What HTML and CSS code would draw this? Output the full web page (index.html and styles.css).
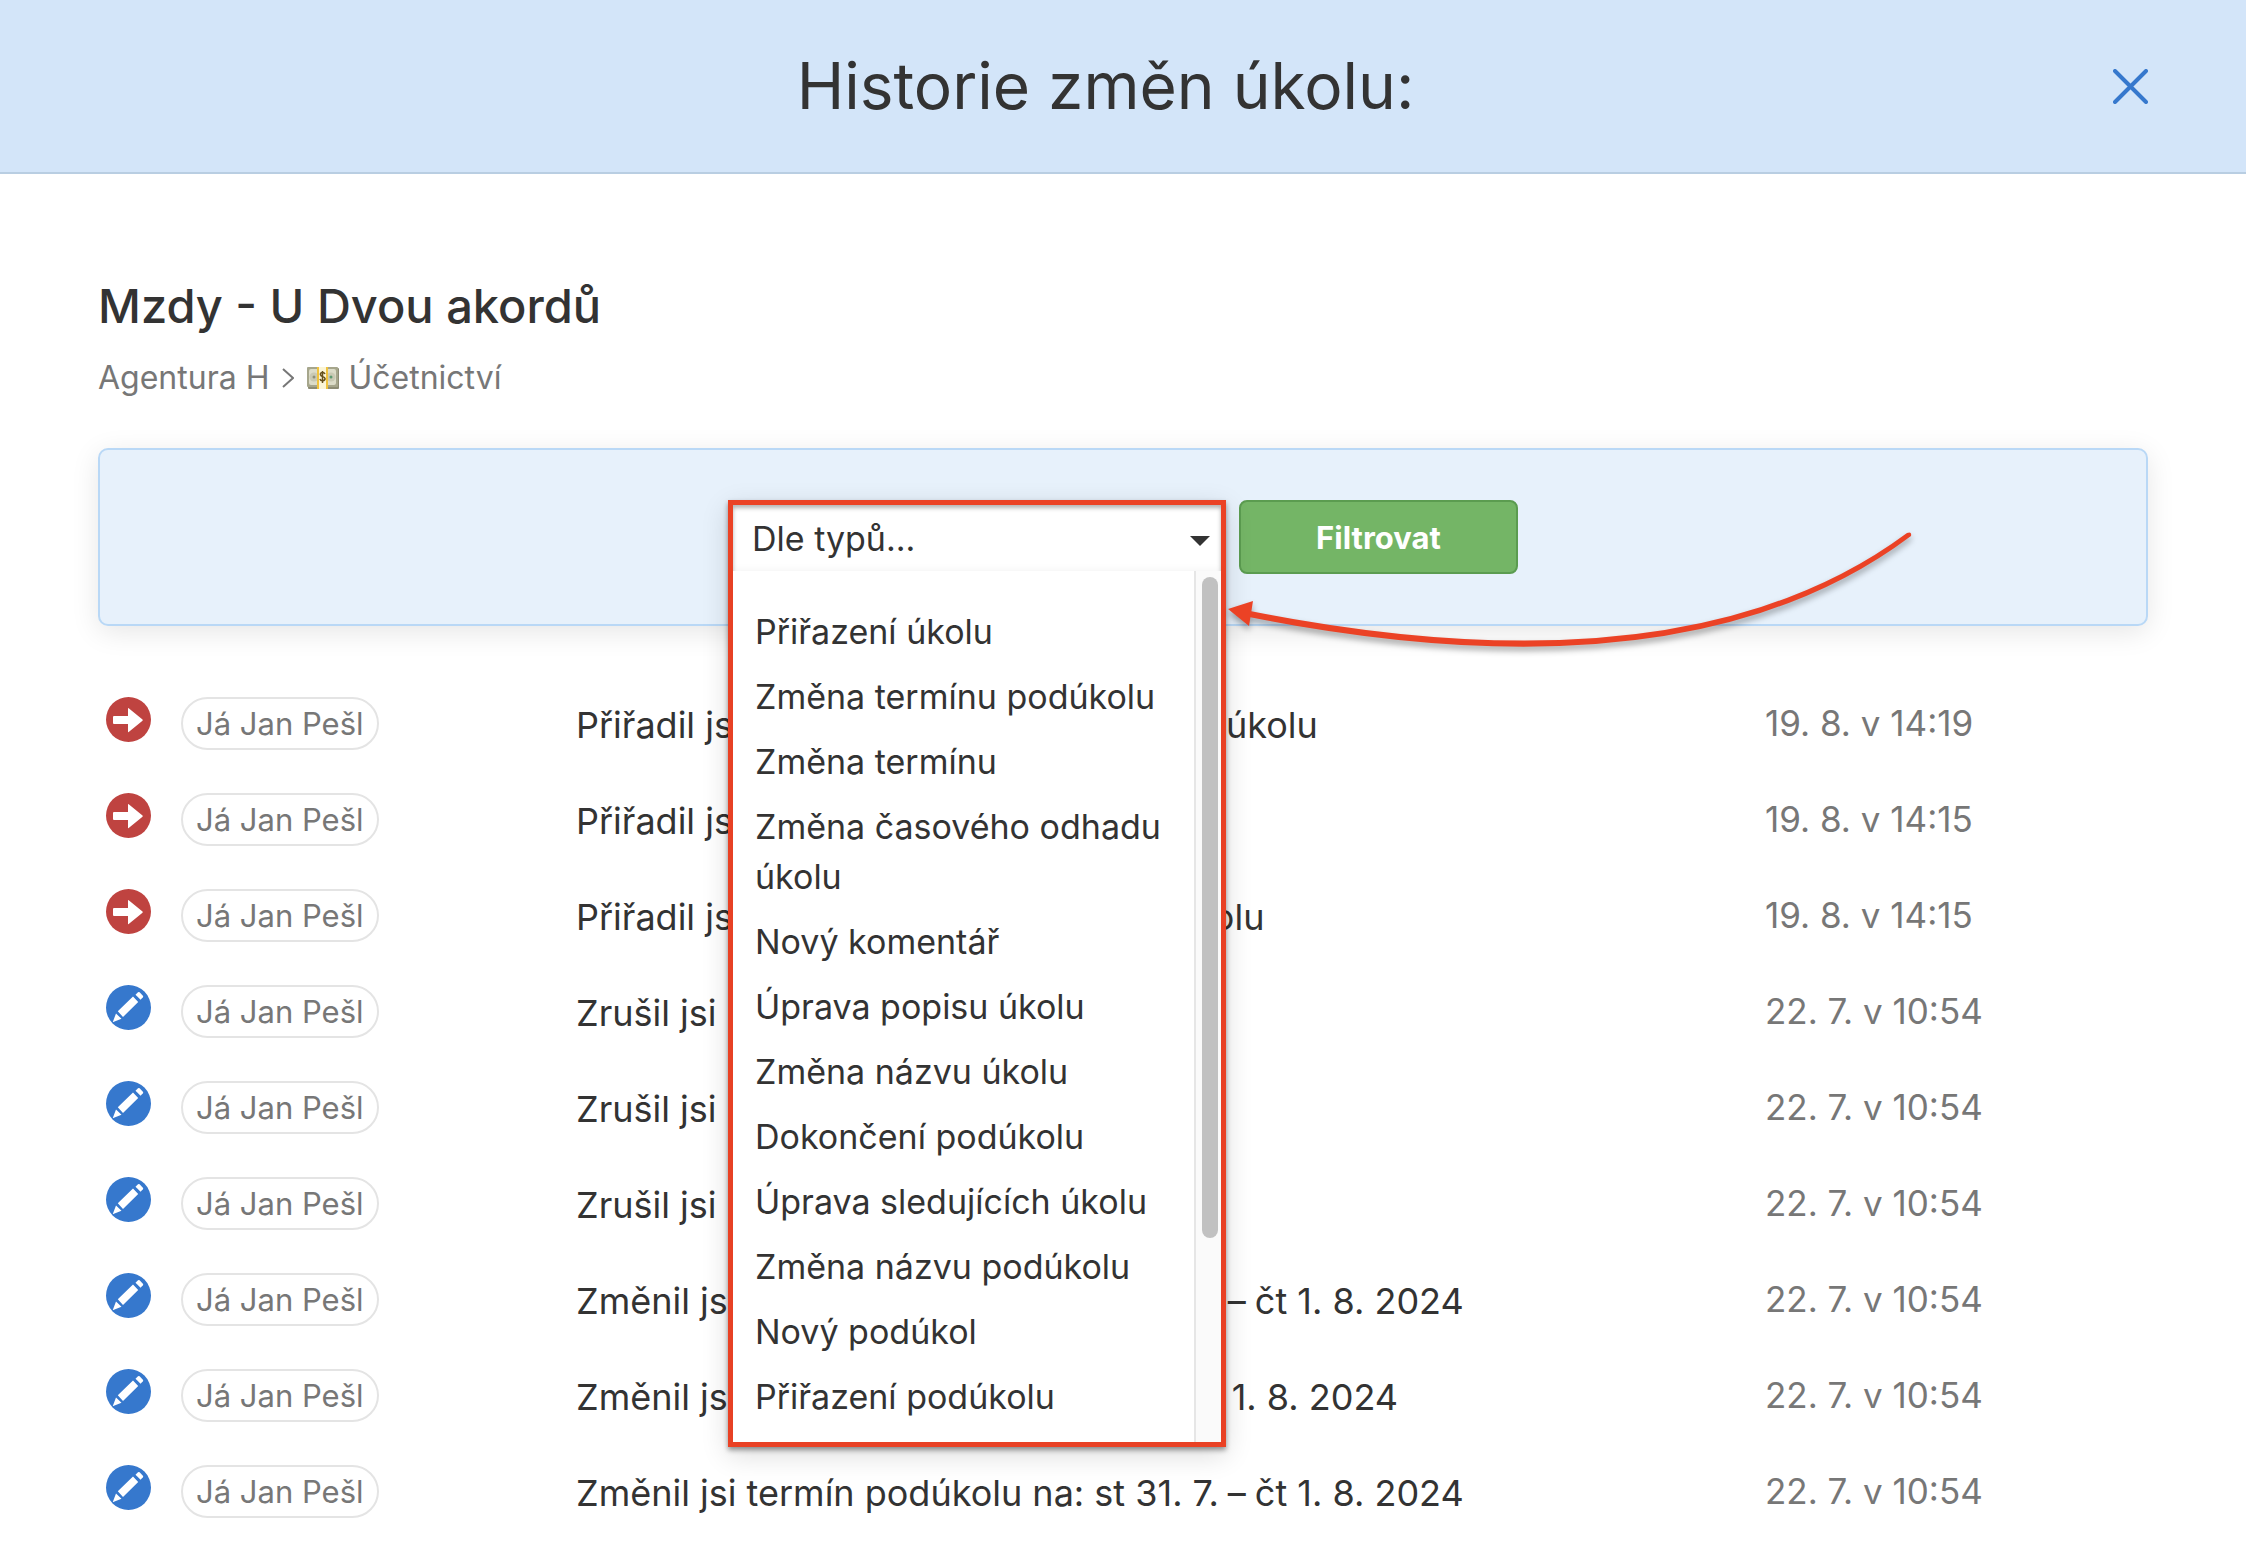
FILE: index.html
```
<!DOCTYPE html>
<html lang="cs">
<head>
<meta charset="utf-8">
<meta name="viewport" content="width=device-width, initial-scale=1">
<title>Historie změn úkolu</title>
<link rel="stylesheet" href="styles.css">
</head>
<body>
<svg class="sprite" aria-hidden="true">
  <symbol id="icon-assign" viewBox="0 0 45 45">
    <circle cx="22.5" cy="22.5" r="22.5" fill="#bf4340"/>
    <path d="M8 19h14v-7.500q0-.8.7-.2L36.500 22.600q.6.6 0 1.200L22.700 35q-.7.6-.7-.2V27H8q-1 0-1-1v-6q0-1 1-1z" fill="#fff"/>
  </symbol>
  <symbol id="icon-edit" viewBox="0 0 45 45">
    <circle cx="22.500" cy="22.500" r="22.500" fill="#3678cd"/>
    <path d="M29.500 9.800l2.500-2.600q.8-.6 1.600.1l3.300 3.400q.7.8 0 1.600l-2.300 2.500z" fill="#fff"/>
    <path d="M11.800 26.300L27 11.600l5.200 5.300L17 32zM10 28.500l5.500 5.300L6.700 37.200z" fill="#fff"/>
  </symbol>
</svg>

<header class="page-header">
  <h1 class="page-title">Historie změn úkolu:</h1>
  <button class="close-button" type="button" aria-label="Zavřít">
    <svg viewBox="0 0 35 35" width="35" height="35"><path d="M2 2l31 31M33 2L2 33" stroke="#3678cd" stroke-width="4" stroke-linecap="round"/></svg>
  </button>
</header>

<main class="content">
  <h2 class="task-title">Mzdy - U Dvou akordů</h2>
  <nav class="breadcrumb" aria-label="Umístění úkolu">
    <a href="#agentura">Agentura H</a>
    <svg class="chevron" viewBox="0 0 12 20" width="12" height="20"><path d="M1 1l10 9-10 9" fill="none" stroke="#777" stroke-width="2"/></svg>
    <a class="project-link" href="#ucetnictvi">
      <svg class="banknote" viewBox="0 0 32 22" width="32" height="22">
        <rect x="1" y="1" width="31" height="21" rx="1" fill="#8d8c74"/>
        <rect x="0" y="0" width="31" height="20" rx="1" fill="#a6a68c"/>
        <rect x="2" y="2" width="27" height="16" rx="2" fill="#dcdcc8"/>
        <circle cx="7" cy="10" r="4.500" fill="#c9c9b3"/>
        <circle cx="7" cy="10" r="1.500" fill="#8f9078"/>
        <circle cx="24" cy="10" r="4.500" fill="#c9c9b3"/>
        <circle cx="24" cy="10" r="1.500" fill="#5d9a72"/>
        <rect x="10" y="0" width="11" height="22" fill="#f0c23c"/>
        <rect x="12" y="0" width="7" height="22" fill="#fbf5d6"/>
        <path d="M18 7q-1-2-3-1.500t-1.500 2.300q.3 1.200 2.300 1.800t2.300 2q0 2-2.300 2.200T13 12M15.500 4v12" fill="none" stroke="#65501c" stroke-width="1.500"/>
      </svg>
      Účetnictví
    </a>
  </nav>

  <form class="filter-panel">
    <div class="type-filter">
      <select class="type-select" aria-label="Typ změny"><option>Dle typů...</option></select>
      <svg class="caret" viewBox="0 0 20 10" width="20" height="10"><path d="M0 0h20L10 10z" fill="#333"/></svg>
      <div class="dropdown">
        <div class="dropdown-body">
          <ul class="type-list">
            <li>Přiřazení úkolu</li>
            <li>Změna termínu podúkolu</li>
            <li>Změna termínu</li>
            <li>Změna časového odhadu úkolu</li>
            <li>Nový komentář</li>
            <li>Úprava popisu úkolu</li>
            <li>Změna názvu úkolu</li>
            <li>Dokončení podúkolu</li>
            <li>Úprava sledujících úkolu</li>
            <li>Změna názvu podúkolu</li>
            <li>Nový podúkol</li>
            <li>Přiřazení podúkolu</li>
          </ul>
          <div class="scroll-track"><div class="scroll-thumb"></div></div>
        </div>
      </div>
      <svg class="pointer" viewBox="0 0 700 170" width="700" height="170" aria-hidden="true">
        <path d="M24 111Q460 197 681 33q5-2 4 3Q462 204 23 117z" fill="#eb4225"/>
        <path d="M2 109l25-8-4 25z" fill="#eb4225"/>
      </svg>
    </div>
    <button class="filter-button" type="button">Filtrovat</button>
  </form>

  <table class="history">
    <colgroup><col class="col-icon"><col class="col-user"><col><col class="col-date"></colgroup>
    <tbody>
      <tr><td><svg class="type-icon"><use href="#icon-assign"/></svg></td><td><span class="user">Já Jan Pešl</span></td><td class="message">Přiřadil jsi uživateli Já Jan Pešl do podúkolu</td><td class="date">19. 8. v 14:19</td></tr>
      <tr><td><svg class="type-icon"><use href="#icon-assign"/></svg></td><td><span class="user">Já Jan Pešl</span></td><td class="message">Přiřadil jsi</td><td class="date">19. 8. v 14:15</td></tr>
      <tr><td><svg class="type-icon"><use href="#icon-assign"/></svg></td><td><span class="user">Já Jan Pešl</span></td><td class="message">Přiřadil jsi uživatele Já Jan Pešl do úkolu</td><td class="date">19. 8. v 14:15</td></tr>
      <tr><td><svg class="type-icon"><use href="#icon-edit"/></svg></td><td><span class="user">Já Jan Pešl</span></td><td class="message">Zrušil jsi</td><td class="date">22. 7. v 10:54</td></tr>
      <tr><td><svg class="type-icon"><use href="#icon-edit"/></svg></td><td><span class="user">Já Jan Pešl</span></td><td class="message">Zrušil jsi</td><td class="date">22. 7. v 10:54</td></tr>
      <tr><td><svg class="type-icon"><use href="#icon-edit"/></svg></td><td><span class="user">Já Jan Pešl</span></td><td class="message">Zrušil jsi</td><td class="date">22. 7. v 10:54</td></tr>
      <tr><td><svg class="type-icon"><use href="#icon-edit"/></svg></td><td><span class="user">Já Jan Pešl</span></td><td class="message">Změnil jsi termín podúkolu na: st 31. 7.&#8197;–&#8197;čt 1. 8. 2024</td><td class="date">22. 7. v 10:54</td></tr>
      <tr><td><svg class="type-icon"><use href="#icon-edit"/></svg></td><td><span class="user">Já Jan Pešl</span></td><td class="message">Změnil jsi termín úkolu na: st 31. 7.&#8197;–&#8197;čt 1. 8. 2024</td><td class="date">22. 7. v 10:54</td></tr>
      <tr><td><svg class="type-icon"><use href="#icon-edit"/></svg></td><td><span class="user">Já Jan Pešl</span></td><td class="message">Změnil jsi termín podúkolu na: st 31. 7.&#8197;–&#8197;čt 1. 8. 2024</td><td class="date">22. 7. v 10:54</td></tr>
    </tbody>
  </table>
</main>
</body>
</html>
```
FILE: styles.css
```
* {
  box-sizing: border-box;
}

body {
  margin: 0;
  background: #fff;
  color: #333;
  font-family: Inter, "Liberation Sans", sans-serif;
  font-size: 34px;
}

.sprite {
  display: none;
}

/* Header */
.page-header {
  display: flex;
  align-items: center;
  padding: 42px 98px;
  border-bottom: 2px solid #b9cee2;
  background: #d3e5f9;
}

.page-title {
  flex: 1;
  margin: 0;
  font-size: 64px;
  font-weight: 400;
  line-height: 88px;
  text-align: center;
}

.close-button {
  display: flex;
  padding: 0;
  border: 0;
  background: none;
}

/* Task heading */
.content {
  padding: 104px 98px 0;
}

.task-title {
  margin: 0;
  font-size: 47px;
  font-weight: 500;
  line-height: 56px;
}

.breadcrumb {
  display: flex;
  align-items: center;
  gap: 13px;
  margin-top: 24px;
  font-size: 32px;
  line-height: 40px;
}

.breadcrumb a {
  color: #777;
  text-decoration: none;
}

.project-link {
  display: flex;
  align-items: center;
  gap: 9px;
}

/* Filter */
.filter-panel {
  display: flex;
  justify-content: center;
  gap: 13px;
  margin-top: 50px;
  padding: 50px 24px;
  border: 2px solid #b9d8f6;
  border-radius: 10px;
  background: #e7f1fb;
  box-shadow: 0 6px 28px rgba(0, 0, 0, 0.1);
}

.type-filter {
  position: relative;
  width: 498px;
}

.type-select {
  width: 100%;
  height: 74px;
  padding: 2px 22px 0;
  border: 2px solid #ccc;
  border-radius: 0;
  background: #fff;
  color: #333;
  font: inherit;
  appearance: none;
}

.caret {
  position: absolute;
  top: 36px;
  right: 16px;
}

.dropdown {
  position: absolute;
  top: 0;
  left: 0;
  right: 0;
  padding-top: 66px;
  border: 5px solid #eb4225;
  box-shadow: 0 3px 5px rgba(0, 0, 0, 0.4), 0 8px 26px rgba(0, 0, 0, 0.14), inset 0 3px 4px rgba(0, 0, 0, 0.3);
}

.dropdown-body {
  display: flex;
  background: #fff;
  box-shadow: 0 -1px 8px rgba(0, 0, 0, 0.05);
}

.type-list {
  flex: 1;
  display: grid;
  gap: 15px;
  margin: 0;
  padding: 36px 24px 20px 22px;
  line-height: 50px;
  list-style: none;
}

.scroll-track {
  width: 27px;
  padding: 6px 2px 6px 6px;
  border-left: 2px solid #e6e6e6;
  background: #fafafa;
}

.scroll-thumb {
  width: 16px;
  height: 77%;
  border-radius: 8px;
  background: #c1c1c1;
}

.pointer {
  position: absolute;
  top: 0;
  left: 100%;
  filter: drop-shadow(0 4px 3px rgba(0, 0, 0, 0.35));
  pointer-events: none;
}

.filter-button {
  width: 279px;
  height: 74px;
  padding-top: 2px;
  border: 2px solid #5b9c50;
  border-radius: 8px;
  background: #74b566;
  color: #fff;
  font: 700 31px Inter, "Liberation Sans", sans-serif;
}

/* History */
.history {
  width: 100%;
  margin-top: 71px;
  border-collapse: collapse;
  table-layout: fixed;
}

.col-icon {
  width: 83px;
}

.col-user {
  width: 395px;
}

.col-date {
  width: 383px;
}

.history td {
  padding: 0 0 43px;
  vertical-align: top;
}

.history tr:last-child td {
  padding-bottom: 0;
}

.type-icon {
  display: block;
  width: 45px;
  height: 45px;
  margin-left: 8px;
}

.user {
  display: block;
  width: max-content;
  padding: 0 13px;
  border: 2px solid #e4e4e4;
  border-radius: 27px;
  color: #777;
  font-size: 31px;
  line-height: 49px;
}

.history .message {
  padding-top: 4px;
  font-size: 36px;
  line-height: 49px;
  white-space: nowrap;
}

.history .date {
  padding-top: 2px;
  color: #777;
  font-size: 35px;
  line-height: 49px;
}
```
